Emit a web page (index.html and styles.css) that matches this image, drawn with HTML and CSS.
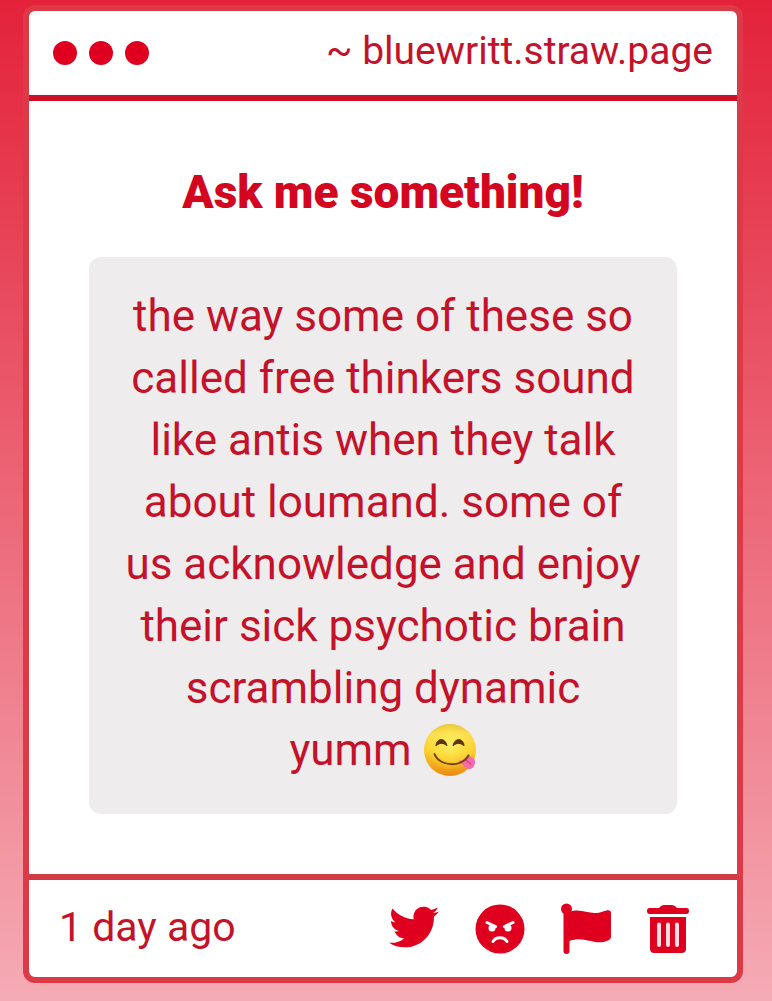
FILE: index.html
```html
<!DOCTYPE html>
<html lang="en">
<head>
    <meta charset="UTF-8">
    <meta name="viewport" content="width=device-width, initial-scale=1">
    <title>Ask me something!</title>
    <link rel="stylesheet" href="styles.css">
</head>
<body>
<div class="card">
    <header class="top">
        <div class="dots">
            <span></span>
            <span></span>
            <span></span>
        </div>
        <a class="site" href="#">~ bluewritt.straw.page</a>
    </header>

    <main class="content">
        <h1>Ask me something!</h1>
        <p class="message">the way some of these so called free thinkers sound like antis when they talk about loumand. some of us acknowledge and enjoy their sick psychotic brain scrambling dynamic <span class="last">yumm
            <svg class="emoji" viewBox="0 0 54 54" role="img" aria-label="yum">
                <defs>
                    <linearGradient id="face" x1="0" y1="0" x2="0" y2="1">
                        <stop offset="0" stop-color="#dfb53a"/>
                        <stop offset="0.2" stop-color="#f9dc58"/>
                        <stop offset="0.55" stop-color="#fbcb2b"/>
                        <stop offset="1" stop-color="#e88a12"/>
                    </linearGradient>
                    <radialGradient id="shine" cx="0.5" cy="0.4" r="0.5">
                        <stop offset="0" stop-color="#fff36e" stop-opacity="0.9"/>
                        <stop offset="0.75" stop-color="#ffe63f" stop-opacity="0.4"/>
                        <stop offset="1" stop-color="#ffd52f" stop-opacity="0"/>
                    </radialGradient>
                </defs>
                <circle cx="27" cy="27" r="26" fill="url(#face)"/>
                <circle cx="27" cy="27" r="26" fill="url(#shine)"/>
                <path d="M13 23c0-8 9.500-9 11 0-3-3.500-8-3.500-11 0z" fill="#5b3708" stroke="#5b3708" stroke-linejoin="round"/>
                <path d="M30 23c1.500-9 11-8 11 0-3-3.500-8-3.500-11 0z" fill="#5b3708" stroke="#5b3708" stroke-linejoin="round"/>
                <path d="M35.500 38c4-.5 7.500-2.500 9.500-6 2 1.500 5 2.500 6.500 4.500 1.500 3.500-.5 8.500-4 9.500-4 1-6-3-12-8z" fill="#f56bae"/>
                <path d="M41.500 36.500c2 1 4 2 6 4.500" fill="none" stroke="#d94289" stroke-width="1.500" stroke-linecap="round"/>
                <path d="M11.500 31c4.500 12.500 27 14 34 1.500" fill="none" stroke="#754408" stroke-width="2" stroke-linecap="round"/>
            </svg></span></p>
    </main>

    <footer class="bottom">
        <span class="time">1 day ago</span>
        <div class="actions">
            <button type="button" aria-label="Share on Twitter">
                <svg viewBox="0 0 50 50">
                    <path d="M50 7.500c-1.800.8-3.800 1.400-5.900 1.600 2.100-1.300 3.700-3.300 4.500-5.700-2 1.200-4.200 2-6.500 2.500A10.260 10.260 0 0 0 24.600 15.200C16.100 14.800 8.500 10.700 3.500 4.500c-2.800 4.700-1.400 10.700 3.100 13.700-1.700 0-3.300-.5-4.600-1.300v.1c0 5 3.500 9.100 8.200 10.100-1.500.4-3.100.5-4.600.2 1.300 4.100 5.100 7 9.600 7.100A20.700 20.700 0 0 1 0 38.700c4.500 2.900 9.900 4.600 15.700 4.600 19 0 29.800-16 29.200-30.600 2-1.400 3.700-3.200 5.100-5.200z"/>
                </svg>
            </button>
            <button type="button" aria-label="Block">
                <svg viewBox="0 0 50 50">
                    <circle cx="25" cy="25" r="24.500"/>
                    <path class="line" d="M12 18.500l8.500 4M38 18.500L29.500 22.500"/>
                    <circle class="hole" cx="17" cy="24" r="3.500"/>
                    <circle class="hole" cx="33" cy="24" r="3.500"/>
                    <path class="line" d="M18 37.500c3-5 11-5 14 0"/>
                </svg>
            </button>
            <button type="button" aria-label="Report">
                <svg viewBox="0 0 50 50">
                    <circle cx="5.500" cy="5" r="5.500"/>
                    <path d="M2.500 6h6v41q0 3-3 3t-3-3z"/>
                    <path d="M8 8c14-5 20 4.500 34-.5 4-1.500 8-2.500 8 1.500v23.500c0 2-1 3-3 4-14 6-23-5.500-39 .5z"/>
                </svg>
            </button>
            <button type="button" aria-label="Delete">
                <svg class="trash" viewBox="0 0 42 50">
                    <path d="M2.500 4H12q2-3 5-3h8q3 0 5 3h9.500Q42 4 42 7t-2.500 3h-37Q0 10 0 7t2.500-3z"/>
                    <path d="M3 13h36v31.500q0 4.500-4.500 4.500h-27Q3 49 3 44.500z"/>
                    <path class="bars" d="M12 20.500V41M21 20.500V41M30 20.500V41"/>
                </svg>
            </button>
        </div>
    </footer>
</div>
</body>
</html>
```
FILE: styles.css
```css
* {
    box-sizing: border-box;
    margin: 0;
    padding: 0;
}
body {
    min-height: 100vh;
    padding: 5px 29px 18px 23px;
    background: linear-gradient(#e3223a, #f5abb5);
    color: #c4122b;
    font-family: Roboto, "Liberation Sans", sans-serif;
}
.card {
    border: 6px solid #dc3a46;
    border-radius: 12px;
    background: #fff;
}
.top {
    display: flex;
    align-items: center;
    justify-content: space-between;
    height: 90px;
    padding: 0 24px;
    border-bottom: 6px solid #cc1027;
}
.dots {
    display: flex;
    gap: 12px;
}
.dots span {
    width: 24px;
    height: 24px;
    border-radius: 50%;
    background: #df001f;
}
.site {
    padding-bottom: 4px;
    color: inherit;
    font-size: 39px;
    line-height: 48px;
    text-decoration: none;
}
.content {
    padding: 60px;
    text-align: center;
}
h1 {
    margin-bottom: 34px;
    color: #d4061f;
    font-size: 46px;
    font-weight: 900;
    line-height: 62px;
}
.message {
    padding: 28px 30px 33px;
    border-radius: 12px;
    background: #eeecec;
    font-size: 44px;
    line-height: 62px;
}
.last {
    white-space: nowrap;
}
.emoji {
    width: 54px;
    height: 54px;
    vertical-align: -12px;
}
.bottom {
    display: flex;
    align-items: center;
    justify-content: space-between;
    height: 103px;
    padding: 0 48px 0 30px;
    border-top: 6px solid #d23a45;
}
.time {
    padding-bottom: 4px;
    font-size: 41px;
    line-height: 48px;
}
.actions {
    display: flex;
    gap: 36px;
}
.actions button {
    border: 0;
    background: none;
    cursor: pointer;
}
.actions svg {
    display: block;
    width: 50px;
    height: 50px;
    fill: #df001f;
    overflow: visible;
}
.actions .trash {
    width: 42px;
}
.actions .line,
.actions .bars {
    fill: none;
    stroke: #fff;
    stroke-width: 3;
    stroke-linecap: round;
}
.actions .bars {
    stroke: #ffdce2;
    stroke-width: 4;
}
.actions .hole {
    fill: #fff;
}
```
